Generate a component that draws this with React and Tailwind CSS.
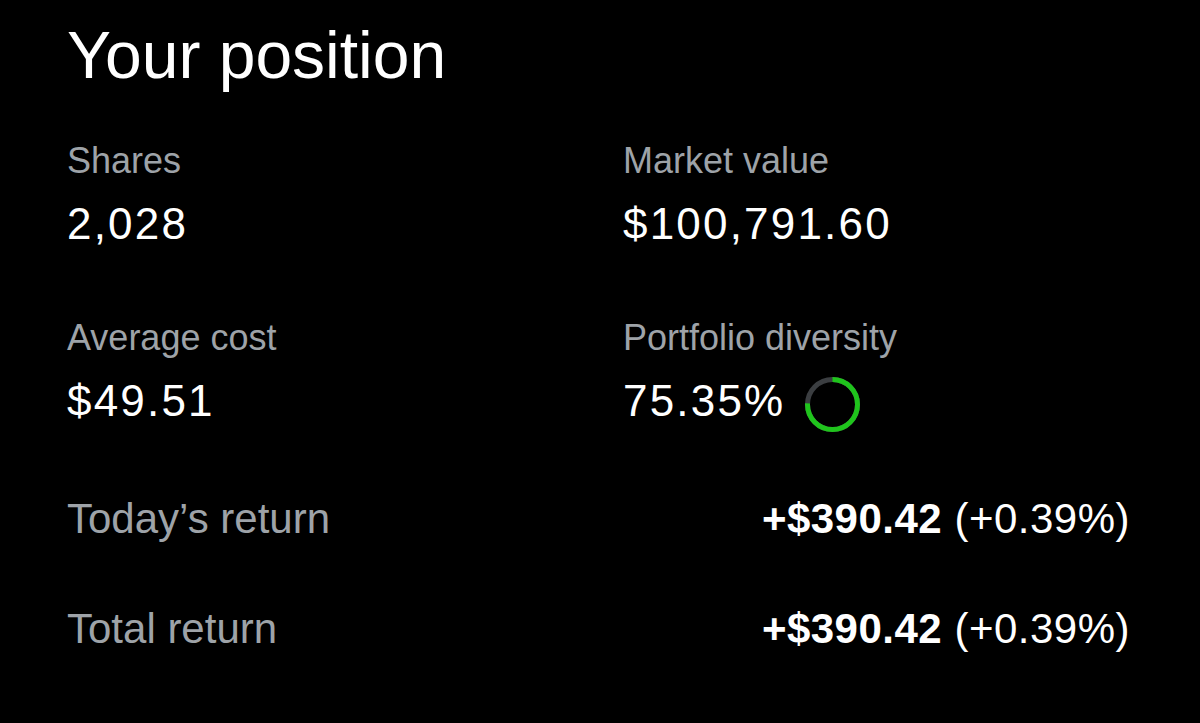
import { useState } from 'react'

function DiversityRing({ percent }) {
  const r = 25
  const c = 2 * Math.PI * r
  return (
    <svg width="55" height="55" viewBox="0 0 55 55" className="mt-[6px] shrink-0">
      <circle cx="27.5" cy="27.5" r={r} fill="none" stroke="#3b3e41" strokeWidth="5" />
      <circle
        cx="27.5"
        cy="27.5"
        r={r}
        fill="none"
        stroke="#1fc41c"
        strokeWidth="5"
        strokeDasharray={`${(percent / 100) * c} ${c}`}
        transform="rotate(-90 27.5 27.5)"
      />
    </svg>
  )
}

function Stat({ label, value, children }) {
  return (
    <div className="flex flex-col">
      <p className="text-[36px] leading-none text-[#9ea3a8]">{label}</p>
      <div className="mt-[23px] flex h-11 items-center">
        <p className="text-[44px] leading-none tracking-[2.2px] text-white">{value}</p>
        {children}
      </div>
    </div>
  )
}

function ReturnRow({ label, amount, pct, className = '' }) {
  return (
    <div className={`flex items-center justify-between ${className}`}>
      <p className="text-[42px] leading-none text-[#9ea3a8]">{label}</p>
      <p className="text-[42px] leading-none tracking-[0.5px] text-white">
        <span className="font-bold">{amount}</span> {pct}
      </p>
    </div>
  )
}

export default function App() {
  const [position] = useState({
    shares: '2,028',
    marketValue: '$100,791.60',
    avgCost: '$49.51',
    diversity: 75.35,
  })

  return (
    <div className="h-[723px] w-[1200px] overflow-hidden bg-black pl-[67px] pr-[70px] pt-[22px] font-['Liberation_Sans',Arial,sans-serif]">
      <h1 className="text-[66px] leading-none text-white">Your position</h1>

      <div className="mt-[55px] grid grid-cols-[556px_1fr] gap-y-[74px]">
        <Stat label="Shares" value={position.shares} />
        <Stat label="Market value" value={position.marketValue} />
        <Stat label="Average cost" value={position.avgCost} />
        <Stat label="Portfolio diversity" value={`${position.diversity}%`}>
          <div className="ml-[20px]">
            <DiversityRing percent={position.diversity} />
          </div>
        </Stat>
      </div>

      <ReturnRow className="mt-[75px]" label="Today’s return" amount="+$390.42" pct="(+0.39%)" />
      <ReturnRow className="mt-[68px]" label="Total return" amount="+$390.42" pct="(+0.39%)" />
    </div>
  )
}
